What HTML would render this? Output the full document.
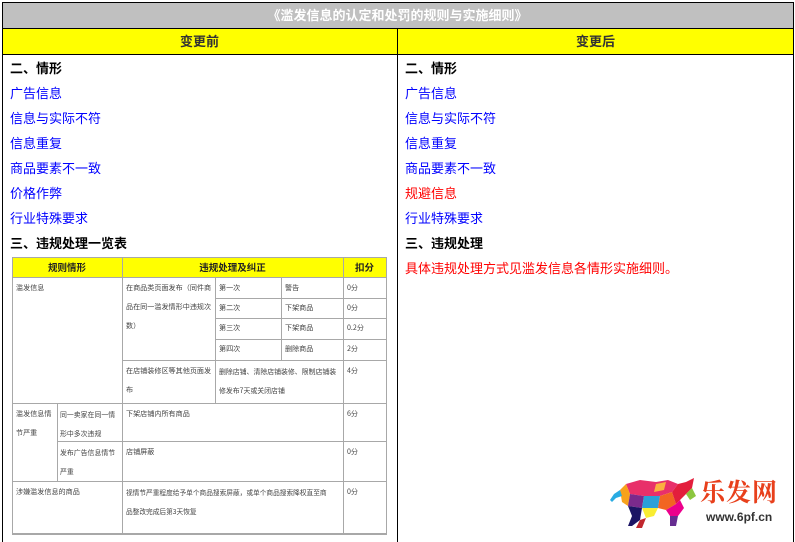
<!DOCTYPE html>
<html><head><meta charset="utf-8"><style>
*{margin:0;padding:0;box-sizing:border-box}
body{width:795px;height:542px;background:#fff;position:relative;overflow:hidden;font-family:"Liberation Sans","Noto Sans CJK SC",sans-serif}
.a{position:absolute}
.ln{position:absolute;background:#000}
.t{position:absolute;font-size:13px;line-height:16px;white-space:nowrap}
.b{color:#00f}.k{color:#000;font-weight:bold}.r{color:#f00}
.g{position:absolute;background:#a8a8a8}
.s{position:absolute;font-size:7.1px;line-height:19px;color:#444;white-space:nowrap;font-family:"Noto Sans CJK SC",sans-serif}
</style></head><body>
<div class="a" style="left:2px;top:3px;width:791px;height:25px;background:#c0c0c0"></div>
<div class="a" style="left:2px;top:29px;width:791px;height:25px;background:#ff0"></div>
<div class="ln" style="left:2px;top:2px;width:792px;height:1px"></div>
<div class="ln" style="left:2px;top:28px;width:792px;height:1px"></div>
<div class="ln" style="left:2px;top:54px;width:792px;height:1px"></div>
<div class="ln" style="left:2px;top:2px;width:1px;height:540px"></div>
<div class="ln" style="left:793px;top:2px;width:1px;height:540px"></div>
<div class="ln" style="left:397px;top:28px;width:1px;height:514px"></div>
<div class="t" style="left:0;width:795px;top:8px;text-align:center;color:#fff;font-weight:bold">《滥发信息的认定和处罚的规则与实施细则》</div>
<div class="t" style="left:2px;width:395px;top:34px;text-align:center;color:#333;font-weight:bold">变更前</div>
<div class="t" style="left:398px;width:395px;top:34px;text-align:center;color:#333;font-weight:bold">变更后</div>

<div class="t k" style="left:10px;top:61px">二、情形</div>
<div class="t b" style="left:10px;top:86px">广告信息</div>
<div class="t b" style="left:10px;top:111px">信息与实际不符</div>
<div class="t b" style="left:10px;top:136px">信息重复</div>
<div class="t b" style="left:10px;top:161px">商品要素不一致</div>
<div class="t b" style="left:10px;top:186px">价格作弊</div>
<div class="t b" style="left:10px;top:211px">行业特殊要求</div>
<div class="t k" style="left:10px;top:236px">三、违规处理一览表</div>

<div class="t k" style="left:405px;top:61px">二、情形</div>
<div class="t b" style="left:405px;top:86px">广告信息</div>
<div class="t b" style="left:405px;top:111px">信息与实际不符</div>
<div class="t b" style="left:405px;top:136px">信息重复</div>
<div class="t b" style="left:405px;top:161px">商品要素不一致</div>
<div class="t r" style="left:405px;top:186px">规避信息</div>
<div class="t b" style="left:405px;top:211px">行业特殊要求</div>
<div class="t k" style="left:405px;top:236px">三、违规处理</div>
<div class="t r" style="left:405px;top:261px">具体违规处理方式见滥发信息各情形实施细则。</div>

<div class="a" style="left:12px;top:257px;width:374px;height:20px;background:#ff0"></div>
<div class="g" style="left:12px;top:257px;width:375px;height:1px"></div>
<div class="g" style="left:12px;top:277px;width:375px;height:1px"></div>
<div class="g" style="left:12px;top:533px;width:375px;height:2px"></div>
<div class="g" style="left:12px;top:257px;width:1px;height:277px"></div>
<div class="g" style="left:386px;top:257px;width:1px;height:277px"></div>
<div class="g" style="left:122px;top:257px;width:1px;height:277px"></div>
<div class="g" style="left:343px;top:257px;width:1px;height:277px"></div>
<div class="g" style="left:215px;top:277px;width:1px;height:126px"></div>
<div class="g" style="left:281px;top:277px;width:1px;height:83px"></div>
<div class="g" style="left:215px;top:298px;width:171px;height:1px"></div>
<div class="g" style="left:215px;top:318px;width:171px;height:1px"></div>
<div class="g" style="left:215px;top:339px;width:171px;height:1px"></div>
<div class="g" style="left:122px;top:360px;width:264px;height:1px"></div>
<div class="g" style="left:12px;top:403px;width:374px;height:1px"></div>
<div class="g" style="left:57px;top:441px;width:329px;height:1px"></div>
<div class="g" style="left:12px;top:481px;width:374px;height:1px"></div>
<div class="g" style="left:57px;top:403px;width:1px;height:78px"></div>

<div class="s" style="left:12px;width:110px;top:258px;text-align:center;font-weight:bold;color:#222;font-size:9.5px">规则情形</div>
<div class="s" style="left:122px;width:221px;top:258px;text-align:center;font-weight:bold;color:#222;font-size:9.5px">违规处理及纠正</div>
<div class="s" style="left:343px;width:43px;top:258px;text-align:center;font-weight:bold;color:#222;font-size:9.5px">扣分</div>
<div class="s" style="left:16px;top:279px">滥发信息</div>
<div class="s" style="left:126px;top:279px">在商品类页面发布（同件商<br>品在同一滥发情形中违规次<br>数）</div>
<div class="s" style="left:219px;top:279px">第一次</div><div class="s" style="left:285px;top:279px">警告</div><div class="s" style="left:347px;top:279px">0分</div>
<div class="s" style="left:219px;top:299px">第二次</div><div class="s" style="left:285px;top:299px">下架商品</div><div class="s" style="left:347px;top:299px">0分</div>
<div class="s" style="left:219px;top:319px">第三次</div><div class="s" style="left:285px;top:319px">下架商品</div><div class="s" style="left:347px;top:319px">0.2分</div>
<div class="s" style="left:219px;top:340px">第四次</div><div class="s" style="left:285px;top:340px">删除商品</div><div class="s" style="left:347px;top:340px">2分</div>
<div class="s" style="left:126px;top:362px">在店铺装修区等其他页面发<br>布</div>
<div class="s" style="left:219px;top:362px;font-size:6.9px">删除店铺、清除店铺装修、限制店铺装<br>修发布7天或关闭店铺</div>
<div class="s" style="left:347px;top:362px">4分</div>
<div class="s" style="left:16px;top:405px">滥发信息情<br>节严重</div>
<div class="s" style="left:60px;top:405px;font-size:6.9px">同一卖家在同一情<br>形中多次违规</div>
<div class="s" style="left:126px;top:405px">下架店铺内所有商品</div><div class="s" style="left:347px;top:405px">6分</div>
<div class="s" style="left:60px;top:443px;font-size:6.9px">发布广告信息情节<br>严重</div>
<div class="s" style="left:126px;top:443px">店铺屏蔽</div><div class="s" style="left:347px;top:443px">0分</div>
<div class="s" style="left:16px;top:483px">涉嫌滥发信息的商品</div>
<div class="s" style="left:126px;top:483px;font-size:6.7px">视情节严重程度给予单个商品搜索屏蔽，或单个商品搜索降权直至商<br>品整改完成后第3天恢复</div>
<div class="s" style="left:347px;top:483px">0分</div>

<svg class="a" style="left:600px;top:470px" width="110" height="65" viewBox="0 0 110 65">
<polygon points="26,14 40,10 56,12 68,10 78,14 72,22 60,26 44,26 30,24" fill="#e8306a"/>
<polygon points="26,14 30,24 28,36 22,32 20,20" fill="#f7a21b"/>
<polygon points="30,24 44,26 42,38 28,36" fill="#7a2a8c"/>
<polygon points="44,26 60,26 58,38 42,38" fill="#2aa0d8"/>
<polygon points="60,26 72,22 76,34 66,40 58,38" fill="#f26522"/>
<polygon points="72,22 78,14 86,12 94,8 92,18 86,24 80,30 76,34" fill="#e31e3c"/>
<polygon points="86,24 92,18 96,26 90,30" fill="#8cc63f"/>
<polygon points="66,40 76,34 80,30 84,38 78,46 70,46" fill="#ec008c"/>
<polygon points="28,36 42,38 40,50 32,56 28,56 32,46" fill="#1b1464"/>
<polygon points="42,38 58,38 54,46 46,48" fill="#f9ed32"/>
<polygon points="40,50 46,48 42,58 36,58" fill="#c1272d"/>
<polygon points="70,46 78,46 76,56 70,56" fill="#662d91"/>
<polygon points="56,14 66,12 64,20 54,22" fill="#fbb040"/>
<polygon points="20,20 14,24 10,30 12,32 16,28 22,26" fill="#29abe2"/>
</svg>
<div class="a" style="left:700px;top:477px;font-size:25px;line-height:28px;font-weight:bold;color:#e8401c;font-family:'Noto Serif CJK SC',serif;letter-spacing:1px">乐发网</div>
<div class="a" style="left:706px;top:510px;font-size:12px;line-height:14px;font-weight:bold;color:#333">www.6pf.cn</div>
</body></html>
